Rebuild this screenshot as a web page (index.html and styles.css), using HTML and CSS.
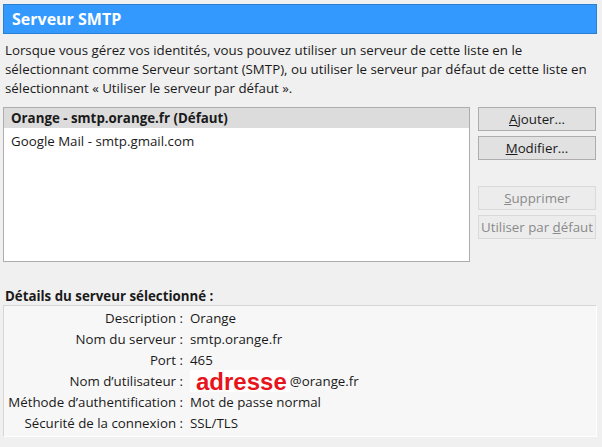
FILE: index.html
```html
<!DOCTYPE html>
<html lang="fr">
<head>
  <meta charset="UTF-8" />
  <title>Serveur SMTP</title>
  <link rel="stylesheet" href="styles.css">
</head>
<body>
  <div class="header">Serveur SMTP</div>
  <p class="intro">Lorsque vous gérez vos identités, vous pouvez utiliser un serveur de cette liste en le<br>sélectionnant comme Serveur sortant (SMTP), ou utiliser le serveur par défaut de cette liste en<br>sélectionnant « Utiliser le serveur par défaut ».</p>

  <div class="servers">
    <ul class="server-list">
      <li class="selected">Orange - smtp.orange.fr (Défaut)</li>
      <li>Google Mail - smtp.gmail.com</li>
    </ul>
    <div class="buttons">
      <button><u>A</u>jouter...</button>
      <button><u>M</u>odifier...</button>
      <div class="spacer"></div>
      <button disabled><u>S</u>upprimer</button>
      <button disabled>Utiliser par <u>d</u>éfaut</button>
    </div>
  </div>

  <h2 class="details-title">Détails du serveur sélectionné :</h2>
  <div class="details">
    <div class="label">Description :</div><div class="value">Orange</div>
    <div class="label">Nom du serveur :</div><div class="value">smtp.orange.fr</div>
    <div class="label">Port :</div><div class="value">465</div>
    <div class="label">Nom d’utilisateur :</div><div class="value"><span class="mark">adresse</span>@orange.fr</div>
    <div class="label">Méthode d’authentification :</div><div class="value">Mot de passe normal</div>
    <div class="label">Sécurité de la connexion :</div><div class="value">SSL/TLS</div>
  </div>
</body>
</html>
```

FILE: styles.css
```css
body {
  margin: 0;
  padding: 4px 5px 0 3px;
  background-color: #f0f0f0;
  color: #1a1a1a;
  font-family: "Open Sans", sans-serif;
  font-size: 13.3px;
}
.header {
  height: 28px;
  line-height: 28px;
  padding-left: 8px;
  background-color: #3399ff;
  border: 1px solid #2b7fd0;
  color: #fff;
  font-size: 16px;
  font-weight: bold;
}
.intro {
  margin: 7px 0 0 2px;
  line-height: 19px;
  white-space: nowrap;
}
.servers {
  display: flex;
  gap: 8px;
  margin-top: 9px;
}
.server-list {
  list-style: none;
  margin: 0;
  padding: 0;
  width: 465px;
  height: 153px;
  background-color: #fff;
  border: 1px solid #adadad;
}
.server-list li {
  padding: 0 7px;
  line-height: 20px;
  margin-bottom: 3px;
}
.server-list li.selected {
  background-color: #dcdcdc;
  font-weight: bold;
}
.buttons {
  display: flex;
  flex-direction: column;
  gap: 5px;
  width: 118px;
}
.buttons button {
  height: 24px;
  padding: 0;
  background-color: #e1e1e1;
  border: 1px solid #adadad;
  color: #1a1a1a;
  font-family: inherit;
  font-size: 13.3px;
}
.buttons button:disabled {
  background-color: #ececec;
  border-color: #d9d9d9;
  color: #8a8a8a;
}
.spacer {
  height: 16px;
}
.details-title {
  margin: 25px 0 0 2px;
  font-size: 13.3px;
  font-weight: bold;
  line-height: 18px;
}
.details {
  display: grid;
  grid-template-columns: 179px 1fr;
  grid-auto-rows: 21px;
  column-gap: 7px;
  padding: 2px 0;
  height: 126px;
  background-color: #f7f7f7;
  border: 1px solid #d6d6d6;
  border-bottom-color: #fff;
  border-right-color: #fff;
  line-height: 21px;
}
.label {
  text-align: right;
}
.mark {
  display: inline-block;
  vertical-align: top;
  height: 22px;
  margin-top: -1px;
  padding: 0 3px 0 6px;
  background-color: #fff;
  color: #e8141c;
  font-family: "Liberation Sans", sans-serif;
  font-size: 24px;
  font-weight: bold;
  line-height: 24px;
}
```
